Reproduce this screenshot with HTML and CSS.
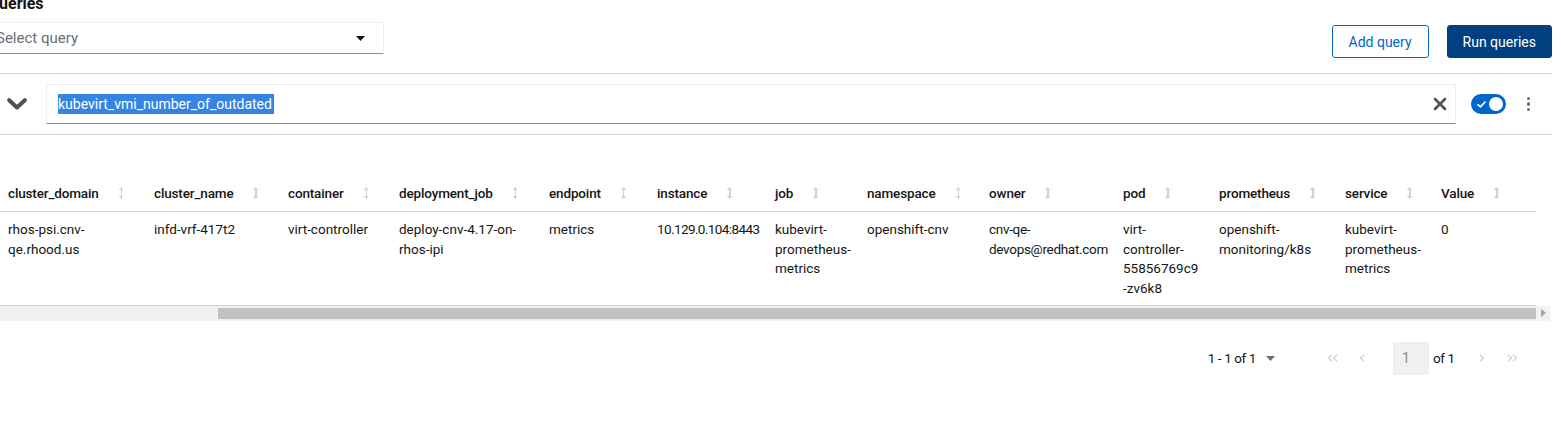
FILE: index.html
```html
<!DOCTYPE html>
<html>
<head>
<meta charset="utf-8">
<link rel="stylesheet" href="styles.css">
</head>
<body>
<div class="page">
  <div class="toolbar">
    <div class="toolbar-left">
      <h2 class="title">Queries</h2>
      <div class="select">
        <span class="select-text">Select query</span>
        <svg class="select-caret" width="9" height="5" viewBox="0 0 9 5"><path d="M0 0h9L4.5 5z" fill="#151515"/></svg>
      </div>
    </div>
    <div class="actions">
      <button class="btn btn-secondary">Add query</button>
      <button class="btn btn-primary">Run queries</button>
    </div>
  </div>

  <div class="query-row">
    <svg class="chevron" width="20" height="12" viewBox="0 0 20 12"><path d="M2.2 2.2l7.8 7.3 7.8-7.3" fill="none" stroke="#4f5255" stroke-width="4" stroke-linecap="round" stroke-linejoin="round"/></svg>
    <div class="query-input">
      <span class="selected">kubevirt_vmi_number_of_outdated</span>
      <svg class="clear" width="14" height="14" viewBox="0 0 14 14"><path d="M2 2l10 10M12 2L2 12" stroke="#4f5255" stroke-width="2.6" stroke-linecap="round"/></svg>
    </div>
    <div class="toggle">
      <svg class="check" width="9" height="7" viewBox="0 0 9 7"><path d="M1 3.6l2.4 2.2L8 1" fill="none" stroke="#fff" stroke-width="1.7" stroke-linecap="round" stroke-linejoin="round"/></svg>
      <span class="knob"></span>
    </div>
    <div class="kebab"><span></span><span></span><span></span></div>
  </div>

  <div class="table-scroll">
    <table class="results">
      <colgroup>
        <col class="w1"><col class="w2"><col class="w3"><col class="w4"><col class="w5"><col class="w6"><col class="w7"><col class="w8"><col class="w9"><col class="w10"><col class="w11"><col class="w12"><col class="w13">
      </colgroup>
      <thead>
        <tr>
          <th class="first"><span class="th-in">cluster_domain<i class="sort"></i></span></th>
          <th><span class="th-in">cluster_name<i class="sort"></i></span></th>
          <th><span class="th-in">container<i class="sort"></i></span></th>
          <th><span class="th-in">deployment_job<i class="sort"></i></span></th>
          <th><span class="th-in">endpoint<i class="sort"></i></span></th>
          <th><span class="th-in">instance<i class="sort"></i></span></th>
          <th><span class="th-in">job<i class="sort"></i></span></th>
          <th><span class="th-in">namespace<i class="sort"></i></span></th>
          <th><span class="th-in">owner<i class="sort"></i></span></th>
          <th><span class="th-in">pod<i class="sort"></i></span></th>
          <th><span class="th-in">prometheus<i class="sort"></i></span></th>
          <th><span class="th-in">service<i class="sort"></i></span></th>
          <th><span class="th-in">Value<i class="sort"></i></span></th>
        </tr>
      </thead>
      <tbody>
        <tr>
          <td class="first">rhos-psi.cnv-<br>qe.rhood.us</td>
          <td>infd-vrf-417t2</td>
          <td>virt-controller</td>
          <td>deploy-cnv-4.17-on-<br>rhos-ipi</td>
          <td>metrics</td>
          <td class="narrow">10.129.0.104:8443</td>
          <td>kubevirt-<br>prometheus-<br>metrics</td>
          <td>openshift-cnv</td>
          <td class="tight">cnv-qe-<br>devops@redhat.com</td>
          <td>virt-<br>controller-<br>55856769c9<br>-zv6k8</td>
          <td>openshift-<br>monitoring/k8s</td>
          <td>kubevirt-<br>prometheus-<br>metrics</td>
          <td>0</td>
        </tr>
      </tbody>
    </table>
  </div>

  <div class="scrollbar">
    <div class="thumb"></div>
    <svg class="sb-arrow" width="5" height="8" viewBox="0 0 5 8"><path d="M0 0l5 4-5 4z" fill="#a3a3a3"/></svg>
  </div>

  <div class="pagination">
    <div class="per-page">
      <span>1 - 1 of 1</span>
      <svg width="9" height="5" viewBox="0 0 9 5"><path d="M0 0h9L4.5 5z" fill="#6a6e73"/></svg>
    </div>
    <div class="nav">
      <span class="nav-btn"><svg width="11" height="8" viewBox="0 0 11 8"><path d="M5 0.8L1.5 4 5 7.2M10 0.8L6.5 4 10 7.2" fill="none" stroke="#d2d2d2" stroke-width="1.4"/></svg></span>
      <span class="nav-btn"><svg width="6" height="8" viewBox="0 0 6 8"><path d="M5 0.8L1.5 4 5 7.2" fill="none" stroke="#d2d2d2" stroke-width="1.4"/></svg></span>
      <span class="page-box">1</span>
      <span class="of">of 1</span>
      <span class="nav-btn next"><svg width="6" height="8" viewBox="0 0 6 8"><path d="M1 0.8L4.5 4 1 7.2" fill="none" stroke="#d2d2d2" stroke-width="1.4"/></svg></span>
      <span class="nav-btn"><svg width="11" height="8" viewBox="0 0 11 8"><path d="M1 0.8L4.5 4 1 7.2M6 0.8L9.5 4 6 7.2" fill="none" stroke="#d2d2d2" stroke-width="1.4"/></svg></span>
    </div>
  </div>
</div>
</body>
</html>
```

FILE: styles.css
```css
html, body {
  margin: 0;
  padding: 0;
  background: #fff;
}
body {
  width: 1561px;
  height: 436px;
  overflow: hidden;
  font-family: Roboto, "Liberation Sans", sans-serif;
  color: #151515;
  font-size: 14px;
}
.page {
  width: 1561px;
}

/* toolbar */
.toolbar {
  width: 1552px;
  height: 73px;
  border-bottom: 1px solid #d2d2d2;
  display: flex;
  justify-content: space-between;
  align-items: flex-start;
}
.toolbar-left {
  margin-left: -12px;
}
.title {
  margin: -6px 0 0 0;
  font-size: 16px;
  line-height: 20px;
  font-weight: 700;
}
.select {
  margin-top: 8px;
  width: 396px;
  height: 32px;
  box-sizing: border-box;
  border-top: 1px solid #f0f0f0;
  border-right: 1px solid #f0f0f0;
  border-bottom: 1px solid #8a8d90;
  display: flex;
  align-items: center;
  justify-content: space-between;
  padding: 0 18px 0 8px;
}
.select-text {
  color: #6a6e73;
  font-size: 15px;
}
.actions {
  margin-top: 25px;
  display: flex;
  gap: 18px;
}
.btn {
  font-family: Roboto, "Liberation Sans", sans-serif;
  font-size: 14px;
  height: 33px;
  padding: 0 16px;
  border-radius: 3px;
  box-sizing: border-box;
  white-space: nowrap;
  cursor: pointer;
}
.btn-secondary {
  background: #fff;
  color: #06c;
  border: 1px solid #06c;
}
.btn-primary {
  background: #004080;
  color: #fff;
  border: 1px solid #004080;
  padding: 0 15px;
}

/* query row */
.query-row {
  width: 1552px;
  height: 60px;
  border-bottom: 1px solid #d2d2d2;
  display: flex;
  align-items: center;
}
.chevron {
  margin-left: 7px;
}
.query-input {
  margin-left: 19px;
  width: 1410px;
  height: 40px;
  box-sizing: border-box;
  border-top: 1px solid #f0f0f0;
  border-left: 1px solid #f0f0f0;
  border-right: 1px solid #f0f0f0;
  border-bottom: 1px solid #8a8d90;
  display: flex;
  align-items: center;
  justify-content: space-between;
  padding: 0 8px 0 11px;
}
.selected {
  background: #3584e4;
  color: #fff;
  font-size: 14px;
  line-height: 20px;
  padding-right: 2px;
}
.toggle {
  margin-left: 15px;
  width: 35px;
  height: 20px;
  border-radius: 10px;
  background: #06c;
  display: flex;
  align-items: center;
  justify-content: space-between;
  padding: 0 3px 0 6px;
  box-sizing: border-box;
}
.knob {
  width: 14px;
  height: 14px;
  border-radius: 50%;
  background: #fff;
}
.kebab {
  margin-left: 21px;
  display: flex;
  flex-direction: column;
  gap: 2px;
}
.kebab span {
  width: 3.4px;
  height: 3.4px;
  border-radius: 50%;
  background: #6a6e73;
}

/* table */
.table-scroll {
  margin-top: 40px;
  width: 1561px;
}
.results {
  border-collapse: collapse;
  table-layout: fixed;
  width: 1536px;
}
.w1 { width: 154px; }
.w2 { width: 134px; }
.w3 { width: 111px; }
.w4 { width: 150px; }
.w5 { width: 108px; }
.w6 { width: 118px; }
.w7 { width: 92px; }
.w8 { width: 122px; }
.w9 { width: 134px; }
.w10 { width: 96px; }
.w11 { width: 126px; }
.w12 { width: 96px; }
.w13 { width: 95px; }
.results th {
  text-align: left;
  font-weight: 500;
  font-size: 13.5px;
  letter-spacing: -0.15px;
  line-height: 20px;
  padding: 8px 0;
  white-space: nowrap;
  border-bottom: 1px solid #d2d2d2;
}
.results td {
  vertical-align: top;
  font-size: 13.5px;
  line-height: 19.7px;
  padding: 8px 0 6px 0;
  white-space: nowrap;
  border-bottom: 1px solid #d2d2d2;
}
.results .first {
  padding-left: 8px;
}
.results .narrow {
  letter-spacing: -0.6px;
}
.results .tight {
  letter-spacing: -0.3px;
}
.th-in {
  display: inline-flex;
  align-items: center;
}
.sort {
  position: relative;
  display: inline-block;
  width: 7px;
  height: 12px;
  margin-left: 19px;
}
.sort::before {
  content: "";
  position: absolute;
  left: 3px;
  top: 2px;
  width: 1.6px;
  height: 8px;
  background: #d2d2d2;
}
.sort::after {
  content: "";
  position: absolute;
  left: 1px;
  top: 0;
  width: 5.6px;
  height: 12px;
  background:
    linear-gradient(to bottom right, transparent 50%, #d2d2d2 50%) 0 0 / 2.8px 3px no-repeat,
    linear-gradient(to bottom left, transparent 50%, #d2d2d2 50%) 2.8px 0 / 2.8px 3px no-repeat,
    linear-gradient(to top right, transparent 50%, #d2d2d2 50%) 0 9px / 2.8px 3px no-repeat,
    linear-gradient(to top left, transparent 50%, #d2d2d2 50%) 2.8px 9px / 2.8px 3px no-repeat;
}

/* scrollbar */
.scrollbar {
  width: 1550px;
  height: 15px;
  background: #f1f1f1;
  display: flex;
  align-items: center;
}
.thumb {
  margin-left: 218px;
  width: 1318px;
  height: 11px;
  background: #c1c1c1;
}
.sb-arrow {
  margin-left: 5px;
}

/* pagination */
.pagination {
  margin-top: 21px;
  display: flex;
  justify-content: flex-end;
  align-items: center;
  padding-right: 34px;
  height: 33px;
}
.per-page {
  display: flex;
  align-items: center;
  gap: 10px;
  margin-right: 42px;
  font-size: 13.5px;
  letter-spacing: -0.4px;
}
.nav {
  display: flex;
  align-items: center;
}
.nav-btn {
  width: 30px;
  height: 33px;
  display: flex;
  align-items: center;
  justify-content: center;
}
.page-box {
  margin-left: 16px;
  width: 36px;
  height: 33px;
  box-sizing: border-box;
  background: #f0f0f0;
  color: #8a8d90;
  display: flex;
  align-items: center;
  padding-left: 9px;
  font-size: 14px;
}
.of {
  margin-left: 4px;
  width: 20px;
  font-size: 13.5px;
  letter-spacing: -0.4px;
  white-space: nowrap;
}
.next {
  margin-left: 14px;
}
```
